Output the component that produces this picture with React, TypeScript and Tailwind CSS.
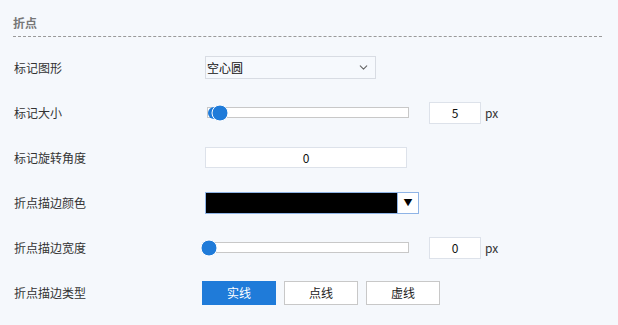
import React from "react";
import { ChevronDown } from "lucide-react";

const font = { fontFamily: '"Microsoft YaHei", "Noto Sans CJK SC", "Liberation Sans", sans-serif' };

function Row({ label, children }: { label: string; children: React.ReactNode }) {
  return (
    <div className="flex h-[45px] items-center">
      <div className="w-[205px] shrink-0 pl-[14px] text-[12px] text-[#333]">{label}</div>
      <div className="flex items-center">{children}</div>
    </div>
  );
}

function Slider({ value, ghost }: { value: number; ghost?: boolean }) {
  return (
    <div className="relative ml-[2px] h-[11px] w-[202px] border border-[#c8c8c8] bg-white">
      {ghost && (
        <div className="absolute left-[0px] top-1/2 h-[12px] w-[12px] -translate-y-1/2 rounded-full bg-[#1f7bd9]" />
      )}
      <div
        className="absolute top-1/2 h-[17px] w-[17px] -translate-x-1/2 -translate-y-1/2 rounded-full border border-white bg-[#1f7bd9]"
        style={{ left: value }}
      />
    </div>
  );
}

function NumBox({ value }: { value: string }) {
  return (
    <div className="ml-[20px] flex items-center">
      <div className="flex h-[22px] w-[52px] items-center justify-center border border-[#dde2ea] bg-white text-[12px] text-[#111]">
        {value}
      </div>
      <span className="ml-[4px] text-[12px] text-[#333]">px</span>
    </div>
  );
}

export default function App() {
  return (
    <div className="h-[325px] w-[618px] bg-[#f5f8fc]" style={font}>
      <div className="ml-[13px] mr-[16px] border-b border-dashed border-[#9a9a9a] pb-[6px] pt-[15px] text-[12px] font-bold leading-[15px] text-[#777]">
        折点
      </div>
      <div className="mt-[8px]">
        <Row label="标记图形">
          <div className="flex h-[23px] w-[171px] items-center justify-between border border-[#d8dce3] bg-[#f6f9fd] pl-[1px] pr-[5px] text-[12px] text-[#111]">
            <span>空心圆</span>
            <ChevronDown className="h-[13px] w-[13px] text-[#666]" strokeWidth={2} />
          </div>
        </Row>
        <Row label="标记大小">
          <Slider value={12} ghost />
          <NumBox value="5" />
        </Row>
        <Row label="标记旋转角度">
          <div className="flex h-[21px] w-[202px] items-center justify-center border border-[#dde2ea] bg-white text-[12px] text-[#111]">
            0
          </div>
        </Row>
        <Row label="折点描边颜色">
          <div className="flex h-[22px] w-[214px] border border-[#8fb4e6] bg-white">
            <div className="h-full flex-1 bg-black" />
            <div className="flex w-[21px] items-center justify-center border-l border-[#8fb4e6] text-[9px] leading-none text-black">
              ▼
            </div>
          </div>
        </Row>
        <Row label="折点描边宽度">
          <Slider value={1} />
          <NumBox value="0" />
        </Row>
        <Row label="折点描边类型">
          <div className="-ml-[3px] flex gap-[8px] text-[12px]">
            <button className="h-[24px] w-[74px] bg-[#1f7bd9] text-white">实线</button>
            <button className="h-[24px] w-[74px] border border-[#c8c8c8] bg-white text-[#222]">点线</button>
            <button className="h-[24px] w-[74px] border border-[#c8c8c8] bg-white text-[#222]">虚线</button>
          </div>
        </Row>
      </div>
    </div>
  );
}
